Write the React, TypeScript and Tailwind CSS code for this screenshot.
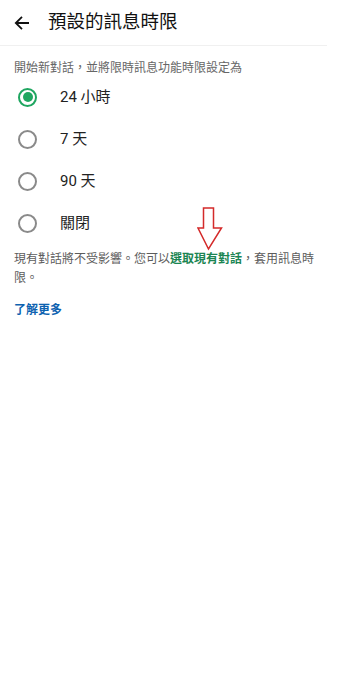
export default function App() {
  const options = [
    { label: '24 小時', checked: true },
    { label: '7 天', checked: false },
    { label: '90 天', checked: false },
    { label: '關閉', checked: false },
  ]

  return (
    <div
      className="relative w-[346px] h-[700px] bg-white text-[#111]"
      style={{ fontFamily: 'Roboto, "Noto Sans CJK TC", sans-serif' }}
    >
      {/* Header */}
      <div className="w-[327px] h-[46px] flex items-center border-b border-[#f0f0f0]">
        <div className="w-[48px] pl-[14px] flex items-center">
          <svg width="16" height="16" viewBox="0 0 16 16" fill="none">
            <path d="M15 8H2M8 1.8L1.8 8L8 14.2" stroke="#111" strokeWidth="1.8" />
          </svg>
        </div>
        <h1 className="text-[18.5px] leading-none font-normal">預設的訊息時限</h1>
      </div>

      {/* Subtitle */}
      <p className="mt-[14px] px-[14px] text-[12px] leading-[16px] text-[#666]">
        開始新對話，並將限時訊息功能時限設定為
      </p>

      {/* Options */}
      <div className="flex flex-col">
        {options.map((o) => (
          <div key={o.label} className="h-[42px] flex items-center">
            <div className="w-[60px] pl-[18px] flex items-center">
              {o.checked ? (
                <div className="w-[19px] h-[19px] rounded-full border-2 border-[#1fa660] flex items-center justify-center">
                  <div className="w-[10px] h-[10px] rounded-full bg-[#1fa660]" />
                </div>
              ) : (
                <div className="w-[19px] h-[19px] rounded-full border-2 border-[#8a8a8a]" />
              )}
            </div>
            <span className="text-[15px] leading-none text-[#222]">{o.label}</span>
          </div>
        ))}
      </div>

      {/* Note */}
      <p className="mt-[6px] pl-[14px] w-[320px] text-[12px] leading-[19px] text-[#5c5c5c]">
        現有對話將不受影響。您可以
        <span className="font-bold text-[#1b8553]">選取現有對話</span>
        ，套用訊息時限。
      </p>

      <p className="mt-[14px] px-[14px] text-[12px] leading-[16px] font-bold text-[#0d62b0]">了解更多</p>

      {/* Annotation arrow */}
      <svg className="absolute left-[197px] top-[207px]" width="26" height="44" viewBox="0 0 26 44" fill="none">
        <path
          d="M6.5 1H16.5V21H24.5L11.5 42L1 21H6.5Z"
          stroke="#d42a2a"
          strokeWidth="1.5"
          strokeLinejoin="miter"
        />
      </svg>
    </div>
  )
}
